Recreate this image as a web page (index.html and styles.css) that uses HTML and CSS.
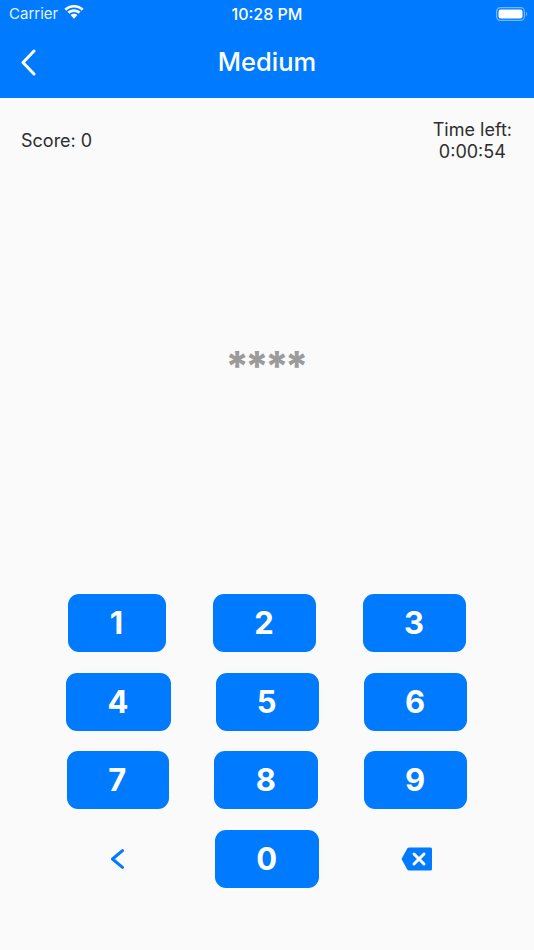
FILE: index.html
```html
<!DOCTYPE html>
<html lang="en">
<head>
<meta charset="utf-8">
<title>Medium</title>
<link rel="stylesheet" href="styles.css">
</head>
<body>
<header class="header">
  <div class="status">
    <div class="status-left">
      <span class="carrier">Carrier</span>
      <svg class="wifi" width="20" height="15" viewBox="0 0 20 15"><path d="M10 2.600c3 0 5.700 1.100 7.700 3.100l1.900-2C17.100 1.400 13.700 0 10 0S2.900 1.400.4 3.700l1.900 2C4.300 3.700 7 2.600 10 2.600z" fill="#fff"/><path d="M10 7c1.800 0 3.400.7 4.600 1.800l1.900-2C14.800 5.300 12.500 4.300 10 4.300S5.200 5.300 3.500 6.800l1.900 2C6.600 7.700 8.200 7 10 7z" fill="#fff"/><path d="M10 8.700c-1.300 0-2.500.5-3.400 1.400l3.400 3.700 3.400-3.700c-.9-.9-2.100-1.400-3.400-1.400z" fill="#fff"/></svg>
    </div>
    <span class="clock">10:28 PM</span>
    <svg class="battery" width="31" height="14" viewBox="0 0 31 14"><rect x=".6" y=".6" width="27.800" height="12.800" rx="3.800" fill="none" stroke="#fff" stroke-opacity=".45" stroke-width="1.200"/><rect x="2.500" y="2.500" width="24" height="9" rx="2.200" fill="#fff"/><path d="M30 5v4c.7-.3 1.200-1.100 1.200-2S30.700 5.300 30 5z" fill="#fff" fill-opacity=".5"/></svg>
  </div>
  <div class="nav">
    <svg class="nav-back" width="16" height="27" viewBox="0 0 16 27"><path d="M14 2 3 13.500 14 25" fill="none" stroke="#fff" stroke-width="3" stroke-linecap="round" stroke-linejoin="round"/></svg>
    <h1 class="title">Medium</h1>
  </div>
</header>
<main class="main">
  <div class="info">
    <span class="score">Score: 0</span>
    <div class="timer">Time left:<br>0:00:54</div>
  </div>
  <div class="code">****</div>
  <div class="keypad">
    <div class="row row-1"><button class="key w98">1</button><button class="key w103">2</button><button class="key w103">3</button></div>
    <div class="row row-2"><button class="key w104">4</button><button class="key w103">5</button><button class="key w103">6</button></div>
    <div class="row row-3"><button class="key w102">7</button><button class="key w104">8</button><button class="key w103">9</button></div>
    <div class="row row-4">
      <svg class="key-back" width="14" height="20" viewBox="0 0 14 20"><path d="M12.500 1.700 2.500 10l10 8.300" fill="none" stroke="#007aff" stroke-width="3" stroke-linecap="round" stroke-linejoin="round"/></svg>
      <button class="key w104">0</button>
      <svg class="key-del" width="32" height="24" viewBox="0 0 32 24"><path d="M8 .5H29.500A1.500 1.500 0 0 1 31 2V22A1.500 1.500 0 0 1 29.500 23.500H8A2 2 0 0 1 6.400 22.700L.5 12 6.400 1.300A2 2 0 0 1 8 .5Z" fill="#007aff"/><path d="M13 7 23 17M23 7 13 17" stroke="#fff" stroke-width="3" stroke-linecap="round"/></svg>
    </div>
  </div>
</main>
</body>
</html>
```
FILE: styles.css
```css
* { box-sizing: border-box; }
html, body { margin: 0; height: 100%; }
body {
  width: 534px;
  height: 950px;
  overflow: hidden;
  background: #fafafa;
  font-family: Inter, "Liberation Sans", sans-serif;
  color: #2e2e2e;
}
.header {
  height: 98px;
  background: #007aff;
  color: #fff;
}
.status {
  height: 27px;
  display: flex;
  align-items: center;
  justify-content: space-between;
  padding: 0 7.500px 0 9px;
  position: relative;
}
.status-left { display: flex; align-items: center; gap: 6px; }
.carrier { font-size: 15px; opacity: .9; }
.wifi { margin-top: -3px; }
.clock {
  position: absolute;
  left: 0;
  right: 0;
  text-align: center;
  font-size: 16px;
  font-weight: 500;
}
.nav {
  height: 71px;
  display: flex;
  align-items: center;
  justify-content: center;
  position: relative;
  padding-bottom: 2px;
}
.nav-back { position: absolute; left: 20px; top: 22px; }
.title { margin: 0; font-size: 25.500px; font-weight: 500; line-height: 30px; }
.main { padding-top: 21px; }
.info {
  display: flex;
  justify-content: space-between;
  align-items: center;
  padding: 0 22px 0 21px;
  font-size: 18px;
  line-height: 22px;
  height: 44px;
}
.timer { text-align: center; }
.code {
  margin-top: 181px;
  height: 44px;
  line-height: 44px;
  padding-right: 4px;
  text-align: center;
  font-size: 41px;
  font-weight: 800;
  letter-spacing: -4px;
  color: #9b9b9b;
}
.keypad {
  margin-top: 206px;
  display: flex;
  flex-direction: column;
  gap: 20.500px;
}
.row { display: flex; height: 58px; align-items: center; }
.row-1 { padding-left: 68px; gap: 47px; }
.row-2 { padding-left: 66.300px; gap: 45.200px; }
.row-3 { padding-left: 66.700px; gap: 45.500px; }
.row-4 { padding-left: 110px; }
.key {
  height: 58px;
  border: 0;
  padding: 0 1px 1px 0;
  border-radius: 11px;
  background: #007aff;
  color: #fff;
  font-family: inherit;
  font-size: 31px;
  font-weight: 700;
}
.w98 { width: 98px; }
.w102 { width: 102px; }
.w103 { width: 103px; }
.w104 { width: 104.300px; }
.key-back { margin-right: 91px; }
.key-del { margin-left: 81.500px; }
```
